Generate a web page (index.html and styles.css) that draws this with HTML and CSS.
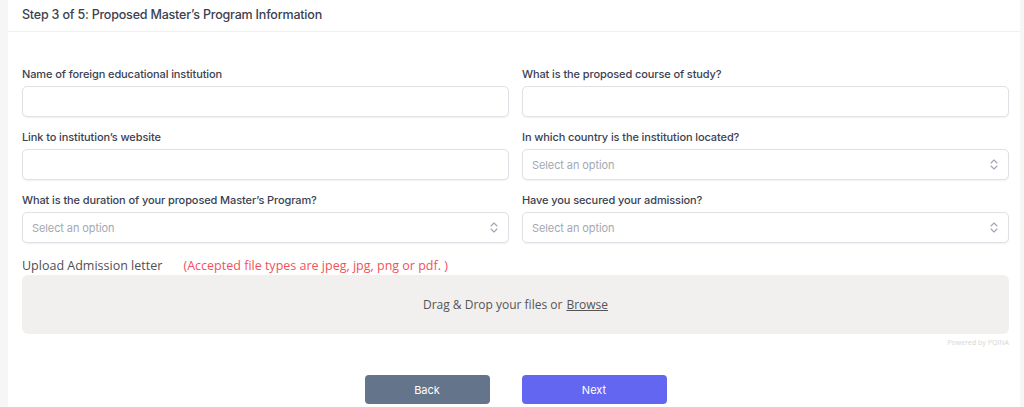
FILE: index.html
```html
<!DOCTYPE html>
<html lang="en">
<head>
<meta charset="utf-8">
<title>Step 3 of 5</title>
<link rel="stylesheet" href="styles.css">
</head>
<body>
<div class="page">
  <div class="card">
    <div class="card-header">Step 3 of 5: Proposed Master’s Program Information</div>
    <div class="card-body">
      <div class="grid">
        <div class="field">
          <label class="label">Name of foreign educational institution</label>
          <div class="control"></div>
        </div>
        <div class="field">
          <label class="label">What is the proposed course of study?</label>
          <div class="control"></div>
        </div>
        <div class="field">
          <label class="label">Link to institution’s website</label>
          <div class="control"></div>
        </div>
        <div class="field">
          <label class="label">In which country is the institution located?</label>
          <div class="control select"><span class="placeholder">Select an option</span>
            <svg class="chev" width="8" height="11" viewBox="0 0 8 11"><path d="M1 4 L4 1 L7 4 M1 7 L4 10 L7 7" fill="none" stroke="#a0a6b1" stroke-width="1.1" stroke-linecap="round" stroke-linejoin="round"/></svg>
          </div>
        </div>
        <div class="field">
          <label class="label">What is the duration of your proposed Master’s Program?</label>
          <div class="control select"><span class="placeholder">Select an option</span>
            <svg class="chev" width="8" height="11" viewBox="0 0 8 11"><path d="M1 4 L4 1 L7 4 M1 7 L4 10 L7 7" fill="none" stroke="#a0a6b1" stroke-width="1.1" stroke-linecap="round" stroke-linejoin="round"/></svg>
          </div>
        </div>
        <div class="field">
          <label class="label">Have you secured your admission?</label>
          <div class="control select"><span class="placeholder">Select an option</span>
            <svg class="chev" width="8" height="11" viewBox="0 0 8 11"><path d="M1 4 L4 1 L7 4 M1 7 L4 10 L7 7" fill="none" stroke="#a0a6b1" stroke-width="1.1" stroke-linecap="round" stroke-linejoin="round"/></svg>
          </div>
        </div>
      </div>
      <div class="upload">
        <div class="upload-label">Upload Admission letter <span class="note">(Accepted file types are jpeg, jpg, png or pdf. )</span></div>
        <div class="drop">Drag &amp; Drop your files or <span class="browse">Browse</span></div>
        <div class="credit">Powered by PQINA</div>
      </div>
      <div class="actions">
        <button class="btn back">Back</button>
        <button class="btn next">Next</button>
      </div>
    </div>
  </div>
</div>
</body>
</html>
```

FILE: styles.css
```css
* { box-sizing: border-box; }
html, body { margin: 0; padding: 0; }
body {
  background: #f6f6f6;
  font-family: Inter, "Noto Sans", sans-serif;
  color: #374151;
  height: 407px;
  overflow: hidden;
}
.page {
  padding-left: 8px;
  padding-right: 4px;
}
.card {
  background: #fff;
  min-height: 407px;
}
.card-header {
  height: 32px;
  padding: 7px 14px 0;
  font-size: 12.5px;
  font-weight: 500;
  letter-spacing: -0.2px;
  color: #3b4150;
  border-bottom: 1px solid #f0f0f0;
}
.card-body {
  padding: 35px 11px 0 14px;
}
.grid {
  display: grid;
  grid-template-columns: 1fr 1fr;
  column-gap: 13px;
  row-gap: 13px;
}
.field { display: flex; flex-direction: column; }
.label {
  font-size: 11px;
  font-weight: 500;
  color: #3b4150;
  letter-spacing: -0.1px;
  line-height: 14px;
  margin-bottom: 5px;
}
.control {
  height: 31px;
  border: 1px solid #dfe1e6;
  border-radius: 5px;
  background: #fff;
  box-shadow: 0 1px 2px rgba(0,0,0,0.06);
}
.select {
  display: flex;
  align-items: center;
  justify-content: space-between;
  padding: 0 10px 0 9px;
}
.placeholder {
  font-size: 11px;
  color: #a4a8b2;
  letter-spacing: -0.1px;
}
.upload { margin-top: 14px; }
.upload-label {
  font-family: "Open Sans", "Liberation Sans", sans-serif;
  font-size: 12.5px;
  color: #4f4f4f;
  line-height: 18px;
  height: 18px;
}
.note {
  color: #f5505a;
  margin-left: 18px;
}
.drop {
  height: 59px;
  background: #f1f0ef;
  border-radius: 6px;
  display: flex;
  align-items: center;
  justify-content: center;
  font-family: "Open Sans", "Liberation Sans", sans-serif;
  font-size: 12px;
  color: #555;
}
.browse {
  text-decoration: underline;
  margin-left: 4px;
}
.credit {
  text-align: right;
  font-family: "Open Sans", "Liberation Sans", sans-serif;
  font-size: 7px;
  color: #d6d6d6;
  margin-top: 4px;
  line-height: 10px;
}
.actions {
  display: flex;
  justify-content: center;
  gap: 32px;
  margin-top: 27px;
}
.btn {
  height: 29px;
  border: none;
  border-radius: 4px;
  color: #fff;
  font-family: Inter, "Noto Sans", sans-serif;
  font-size: 11px;
}
.back { width: 125px; background: #64748b; }
.next { width: 145px; background: #6366f1; }
```
